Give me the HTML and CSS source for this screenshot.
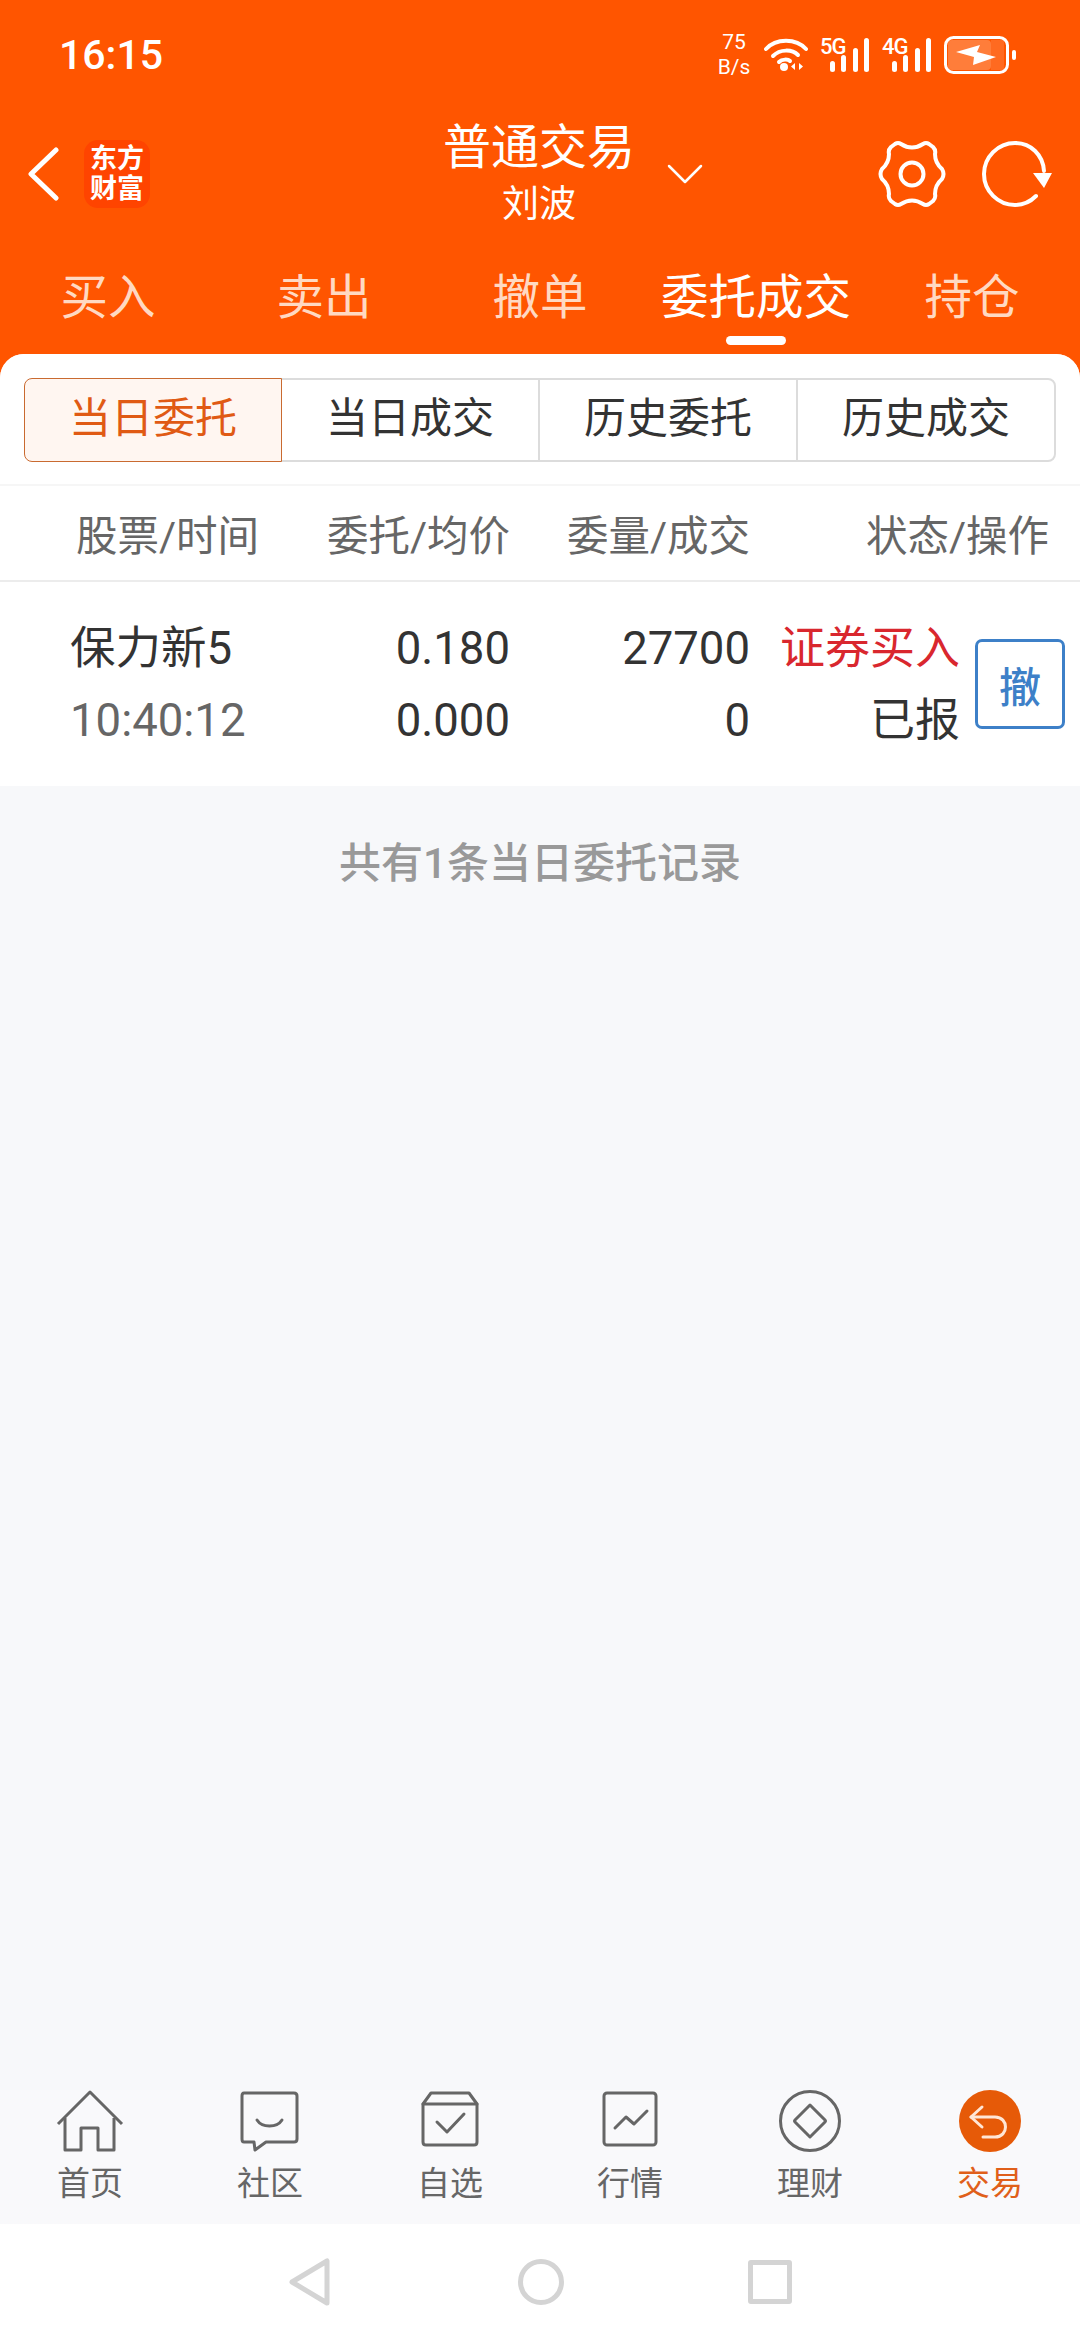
FILE: index.html
```html
<!DOCTYPE html>
<html lang="zh-CN">
<head>
  <meta charset="UTF-8">
  <meta name="viewport" content="width=device-width, initial-scale=1.0">
  <title>普通交易</title>
  <link rel="stylesheet" href="styles.css">
</head>
<body>
  <div class="app">

    <!-- Status bar -->
    <div class="statusbar">
      <span class="clock">16:15</span>
      <div class="status-icons">
        <div class="speed"><span>75</span><span>B/s</span></div>
        <svg class="ic-wifi" width="44" height="34" viewBox="0 0 44 34" fill="none" stroke="#fff" stroke-width="4" stroke-linecap="round">
          <path d="M2 11C12 0 32 0 42 11"/>
          <path d="M9 18C16 11 28 11 34 17"/>
          <path d="M15 24C18 21 24 21 26 23"/>
          <circle cx="20" cy="29" r="4" fill="#fff" stroke="none"/>
          <path d="M31 25v7l-4-3.500zM35 25v7l4-3.500z" fill="#fff" stroke="none"/>
        </svg>
        <div class="signal">
          <span class="net">5G</span>
          <svg width="40" height="34" viewBox="0 0 40 34" fill="#fff">
            <rect x="0" y="23" width="5" height="11" rx="2.500"/>
            <rect x="11" y="17" width="5" height="17" rx="2.500"/>
            <rect x="23" y="10" width="5" height="24" rx="2.500"/>
            <rect x="34" y="0" width="5" height="34" rx="2.500"/>
          </svg>
        </div>
        <div class="signal">
          <span class="net">4G</span>
          <svg width="40" height="34" viewBox="0 0 40 34" fill="#fff">
            <rect x="0" y="23" width="5" height="11" rx="2.500"/>
            <rect x="11" y="17" width="5" height="17" rx="2.500"/>
            <rect x="23" y="10" width="5" height="24" rx="2.500"/>
            <rect x="34" y="0" width="5" height="34" rx="2.500"/>
          </svg>
        </div>
        <svg width="74" height="38" viewBox="0 0 74 38" fill="none">
          <rect x="4" y="4" width="43" height="30" rx="4" fill="#ff7d3a"/>
          <rect x="47" y="4" width="13" height="30" fill="#ff6a20"/>
          <rect x="1.500" y="1.500" width="62" height="35" rx="8" stroke="#fff" stroke-width="3"/>
          <rect x="68" y="14" width="4" height="10" rx="2" fill="#fff"/>
          <path d="M12 16L36 9L33 16L52 21L29 29L30 21Z" fill="#fff"/>
        </svg>
      </div>
    </div>

    <!-- Title bar -->
    <div class="titlebar">
      <svg width="32" height="54" viewBox="0 0 32 54" fill="none" stroke="#fff" stroke-width="5" stroke-linecap="round" stroke-linejoin="round">
        <path d="M29 3L4 27L29 51"/>
      </svg>
      <div class="logo">东方<br>财富</div>
      <div class="title">
        <div class="title-main">普通交易</div>
        <div class="title-sub">刘波</div>
      </div>
      <svg class="ic-down" width="36" height="22" viewBox="0 0 36 22" fill="none" stroke="#fff" stroke-width="2.500" stroke-linecap="round" stroke-linejoin="round">
        <path d="M2 3L18 19L34 3"/>
      </svg>
      <svg width="68" height="68" viewBox="0 0 68 68" fill="none" stroke="#fff" stroke-width="4" stroke-linejoin="round">
        <path d="M23 4Q34 11 45 4Q48 2 51 4L55 7Q58 10 57 14Q57 23 64 29Q67 34 64 39Q57 45 57 54Q58 58 55 61L51 64Q48 66 45 64Q34 57 23 64Q20 66 17 64L13 61Q10 58 11 54Q11 45 4 39Q1 34 4 29Q11 23 11 14Q10 10 13 7L17 4Q20 2 23 4Z"/>
        <circle cx="34" cy="34" r="11.500"/>
      </svg>
      <svg class="ic-refresh" width="70" height="66" viewBox="0 0 70 66" fill="none" stroke="#fff" stroke-width="4" stroke-linecap="round">
        <path d="M54 55C48 61 41 64 33 64C16 64 2 50 2 33C2 16 16 2 33 2C49 2 61 14 62 30"/>
        <path d="M51 32H70L62 47Z" fill="#fff" stroke="none"/>
      </svg>
    </div>

    <!-- Trade tabs -->
    <div class="tabs">
      <div class="tab">买入</div>
      <div class="tab">卖出</div>
      <div class="tab">撤单</div>
      <div class="tab active">委托成交</div>
      <div class="tab">持仓</div>
    </div>

    <div class="content">
      <div class="seg-wrap">
        <div class="seg">
          <div class="seg-item active">当日委托</div>
          <div class="seg-item">当日成交</div>
          <div class="seg-item">历史委托</div>
          <div class="seg-item">历史成交</div>
        </div>
      </div>

      <div class="thead">
        <div class="th-name">股票/时间</div>
        <div>委托/均价</div>
        <div>委量/成交</div>
        <div>状态/操作</div>
      </div>

      <div class="order">
        <div class="order-cols">
          <div class="col-name">保力新5</div>
          <div class="col-num">0.180</div>
          <div class="col-num">27700</div>
          <div class="col-num status buy">证券买入</div>
          <div class="col-name time">10:40:12</div>
          <div class="col-num">0.000</div>
          <div class="col-num">0</div>
          <div class="col-num status">已报</div>
        </div>
        <button class="cancel">撤</button>
      </div>

      <div class="summary">共有1条当日委托记录</div>
    </div>

    <!-- Bottom menu -->
    <div class="menu">
      <div class="menu-item">
        <svg width="70" height="62" viewBox="0 0 70 62" fill="none" stroke="#666" stroke-width="3" stroke-linejoin="round">
          <path d="M3 34L35 2L67 34"/>
          <path d="M10 28V60H26V38H43V60H59V28"/>
        </svg>
        <span>首页</span>
      </div>
      <div class="menu-item">
        <svg width="70" height="62" viewBox="0 0 70 62" fill="none" stroke="#666" stroke-width="3" stroke-linecap="round" stroke-linejoin="round">
          <path d="M9 3H59Q62 3 62 6V49Q62 52 59 52H31L20 60L19 52H9Q7 52 7 49V6Q7 3 9 3Z"/>
          <path d="M22 30C27 38 42 38 47 30"/>
        </svg>
        <span>社区</span>
      </div>
      <div class="menu-item">
        <svg width="70" height="62" viewBox="0 0 70 62" fill="none" stroke="#666" stroke-width="3" stroke-linecap="round" stroke-linejoin="round">
          <path d="M8 14L16 3H54L62 14V52Q62 55 59 55H11Q8 55 8 52Z"/>
          <path d="M8 14H62"/>
          <path d="M22 32L32 42L49 24"/>
        </svg>
        <span>自选</span>
      </div>
      <div class="menu-item">
        <svg width="70" height="62" viewBox="0 0 70 62" fill="none" stroke="#666" stroke-width="3" stroke-linecap="round" stroke-linejoin="round">
          <rect x="9" y="3" width="52" height="52" rx="3"/>
          <path d="M20 38L31 27L39 34L52 21"/>
        </svg>
        <span>行情</span>
      </div>
      <div class="menu-item">
        <svg width="70" height="62" viewBox="0 0 70 62" fill="none" stroke="#666" stroke-width="3" stroke-linejoin="round">
          <circle cx="35" cy="31" r="29.500"/>
          <path d="M35 15L50 30Q51 31 50 32L35 47L20 32Q19 31 20 30Z"/>
        </svg>
        <span>理财</span>
      </div>
      <div class="menu-item active">
        <svg width="70" height="62" viewBox="0 0 70 62" fill="none" stroke="#ffe6d6" stroke-width="3" stroke-linecap="round" stroke-linejoin="round">
          <circle cx="35" cy="31" r="31" fill="#e65a08" stroke="none"/>
          <path d="M27 17L16 27L27 37"/>
          <path d="M16 27H40C54 27 54 47 40 47H28"/>
        </svg>
        <span>交易</span>
      </div>
    </div>

    <!-- System navigation -->
    <div class="sysnav">
      <svg width="42" height="48" viewBox="0 0 42 48" fill="none" stroke="#d4d4d4" stroke-width="5" stroke-linejoin="round"><path d="M38 3V45L3 24Z"/></svg>
      <div class="nav-circle"></div>
      <div class="nav-square"></div>
    </div>

  </div>
</body>
</html>
```

FILE: styles.css
```css
/* General Styling */
* {
  box-sizing: border-box;
}

body {
  margin: 0;
  font-family: Roboto, "Noto Sans CJK SC", sans-serif;
  color: #333;
}

svg {
  display: block;
  flex: none;
}

.app {
  display: flex;
  flex-direction: column;
  width: 1080px;
  height: 2340px;
  overflow: hidden;
  background: #ff5500;
}

/* Status bar */
.statusbar {
  display: flex;
  align-items: center;
  justify-content: space-between;
  height: 110px;
  padding: 0 62px 0 59px;
  color: #fff;
}

.clock {
  font-size: 41px;
  font-weight: 500;
}

.status-icons {
  display: flex;
  align-items: center;
  gap: 12px;
}

.speed {
  display: flex;
  flex-direction: column;
  align-items: center;
  width: 36px;
  font-size: 21px;
  line-height: 25px;
}

.signal {
  position: relative;
  width: 50px;
  padding-left: 10px;
}

.net {
  position: absolute;
  top: -1px;
  left: 0;
  font-size: 22px;
  font-weight: 500;
  line-height: 20px;
  letter-spacing: -1px;
}

/* Title bar */
.titlebar {
  display: flex;
  align-items: center;
  height: 128px;
  padding-left: 27px;
}

.logo {
  width: 66px;
  height: 68px;
  margin-left: 25px;
  padding-top: 4px;
  border-radius: 14px;
  background: #ff4400;
  color: #fff;
  font-size: 27px;
  font-weight: 700;
  line-height: 30px;
  text-align: center;
}

.title {
  flex: none;
  width: 192px;
  margin-left: 293px;
  margin-right: 32px;
  color: #fff;
  text-align: center;
}

.title-main {
  font-size: 48px;
  line-height: 62px;
}

.title-sub {
  font-size: 37px;
  line-height: 52px;
}

.ic-down {
  margin-right: 175px;
}

.ic-refresh {
  margin-left: 36px;
}

/* Trade tabs */
.tabs {
  display: grid;
  grid-template-columns: repeat(5, 216px);
  height: 116px;
}

.tab {
  position: relative;
  padding-top: 28px;
  color: #ffd9c2;
  font-size: 47.500px;
  line-height: 64px;
  text-align: center;
}

.tab.active {
  color: #fff;
}

.tab.active::after {
  content: "";
  position: absolute;
  left: 78px;
  top: 98px;
  width: 60px;
  height: 9px;
  border-radius: 5px;
  background: #fff;
}

/* Main panel */
.content {
  flex: 1;
  overflow: hidden;
  border-radius: 24px 24px 0 0;
  background: #f7f8fa;
}

.seg-wrap {
  height: 132px;
  padding: 24px 24px 0;
  background: #fff;
  border-bottom: 2px solid #f6f6f6;
}

.seg {
  display: grid;
  grid-template-columns: repeat(4, 1fr);
  height: 84px;
}

.seg-item {
  margin-left: -2px;
  border: 2px solid #dcdcdc;
  background: #fff;
  color: #333;
  font-size: 42px;
  line-height: 78px;
  text-align: center;
}

.seg-item:first-child {
  margin-left: 0;
  border-radius: 8px 0 0 8px;
}

.seg-item:last-child {
  border-radius: 0 8px 8px 0;
}

.seg-item.active {
  position: relative;
  border: 1px solid #c96a30;
  background: #fff6f1;
  color: #e05a14;
  line-height: 80px;
}

.thead {
  display: grid;
  grid-template-columns: 240px 200px 240px 299px;
  align-items: center;
  height: 96px;
  padding-left: 70px;
  background: #fff;
  border-bottom: 2px solid #ececec;
  color: #666;
  font-size: 41.500px;
  text-align: right;
}

.th-name {
  padding-left: 6px;
  text-align: left;
  white-space: nowrap;
}

.order {
  display: flex;
  align-items: center;
  height: 204px;
  padding-left: 70px;
  background: #fff;
}

.order-cols {
  display: grid;
  grid-template-columns: 240px 200px 240px 210px;
  grid-auto-rows: 73px;
  align-items: baseline;
  color: #333;
  font-size: 45.500px;
}

.col-name {
  white-space: nowrap;
}

.col-num {
  text-align: right;
  white-space: nowrap;
}

.status {
  font-size: 45px;
}

.time {
  color: #666;
}

.buy {
  color: #d9272e;
}

.cancel {
  width: 90px;
  height: 90px;
  margin-left: 15px;
  padding: 0;
  border: 3px solid #3d80c8;
  border-radius: 7px;
  background: #fff;
  color: #3d80c8;
  font-family: inherit;
  font-size: 42px;
  font-weight: 500;
}

.summary {
  margin-top: 50px;
  color: #999;
  font-size: 42px;
  font-weight: 500;
  line-height: 56px;
  text-align: center;
}

/* Bottom menu */
.menu {
  display: grid;
  grid-template-columns: repeat(6, 180px);
  height: 134px;
  background: #f9f9fb;
}

.menu-item {
  display: flex;
  flex-direction: column;
  align-items: center;
  color: #666;
  font-size: 33px;
  line-height: 44px;
}

.menu-item span {
  margin-top: 10px;
}

.menu-item.active {
  color: #e05f1a;
}

/* System navigation */
.sysnav {
  display: flex;
  align-items: center;
  justify-content: center;
  height: 116px;
  background: #fff;
}

.sysnav svg {
  margin-right: 187px;
}

.nav-circle {
  width: 46px;
  height: 46px;
  margin-right: 184px;
  border: 5px solid #d4d4d4;
  border-radius: 50%;
}

.nav-square {
  width: 44px;
  height: 44px;
  border: 5px solid #d4d4d4;
  border-radius: 3px;
}
```
